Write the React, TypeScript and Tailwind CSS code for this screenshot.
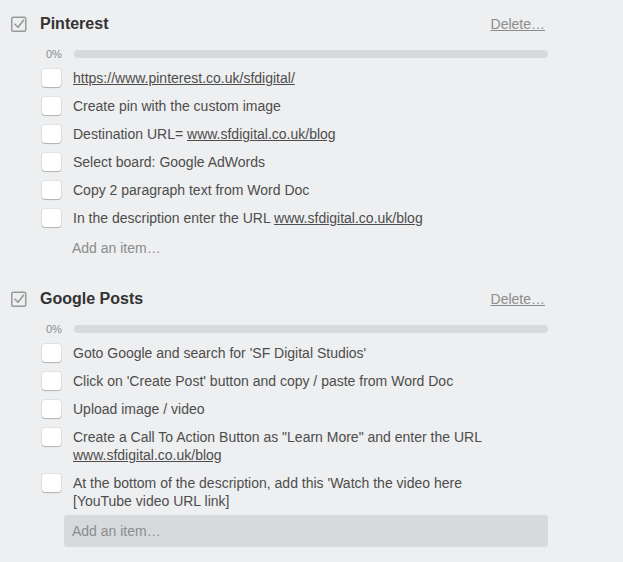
import React from "react";

type Part = { t: string; link?: boolean };
type Item = Part[];

const sections: { title: string; items: Item[]; active?: boolean }[] = [
  {
    title: "Pinterest",
    items: [
      [{ t: "https://www.pinterest.co.uk/sfdigital/", link: true }],
      [{ t: "Create pin with the custom image" }],
      [{ t: "Destination URL= " }, { t: "www.sfdigital.co.uk/blog", link: true }],
      [{ t: "Select board: Google AdWords" }],
      [{ t: "Copy 2 paragraph text from Word Doc" }],
      [{ t: "In the description enter the URL " }, { t: "www.sfdigital.co.uk/blog", link: true }],
    ],
  },
  {
    title: "Google Posts",
    active: true,
    items: [
      [{ t: "Goto Google and search for 'SF Digital Studios'" }],
      [{ t: "Click on 'Create Post' button and copy / paste from Word Doc" }],
      [{ t: "Upload image / video" }],
      [
        { t: 'Create a Call To Action Button as "Learn More" and enter the URL ' },
        { t: "www.sfdigital.co.uk/blog", link: true },
      ],
      [{ t: "At the bottom of the description, add this 'Watch the video here [YouTube video URL link]" }],
    ],
  },
];

function HeaderIcon() {
  return (
    <svg width="17" height="16" viewBox="0 0 17 16" fill="none" className="shrink-0">
      <rect x="0.75" y="1.25" width="14" height="14" rx="1.5" stroke="#999" strokeWidth="1.5" />
      <path d="M4 8.2 L7 11.2 L12.5 4.2" stroke="#999" strokeWidth="1.6" strokeLinecap="round" strokeLinejoin="round" />
    </svg>
  );
}

export default function App() {
  return (
    <div
      className="w-[623px] min-h-[562px] bg-[#edeff0] pt-[1px] pl-[11px] pr-[75px] text-[#4d4d4d]"
      style={{ fontFamily: '"Liberation Sans", Arial, sans-serif' }}
    >
      {sections.map((s, si) => (
        <div key={si} className="pt-[13px] pb-[12px]">
          <div className="flex items-center h-[20px]">
            <HeaderIcon />
            <div className="ml-[12px] text-[16px] leading-[20px] font-bold text-[#333]">{s.title}</div>
            <div className="ml-auto mr-[3px] text-[14px] leading-[18px] text-[#8c8c8c] underline">Delete…</div>
          </div>
          <div className="mt-[14px] flex items-center h-[12px] pl-[35px]">
            <div className="w-[28px] text-[11px] leading-[12px] text-[#8c8c8c]">0%</div>
            <div className="flex-1 h-[8px] rounded-[4px] bg-[#d6dadc]" />
          </div>
          <div className="mt-[4px]">
            {s.items.map((it, ii) => (
              <div key={ii} className="flex items-start pl-[31px] pr-[30px] py-[5px]">
                <div className="w-[19px] h-[18px] shrink-0 rounded-[3px] bg-white shadow-[0_0_0_1px_rgba(0,0,0,0.05),0_1px_1px_rgba(0,0,0,0.22)]" />
                <div className="ml-[12px] text-[14px] leading-[18px] flex-1">
                  {it.map((p, pi) =>
                    p.link ? (
                      <span key={pi} className="underline">
                        {p.t}
                      </span>
                    ) : (
                      <span key={pi}>{p.t}</span>
                    )
                  )}
                </div>
              </div>
            ))}
          </div>
          <div
            className={
              "ml-[53px] h-[32px] flex items-center pl-[8px] rounded-[3px] text-[14px] text-[#8c8c8c] " +
              (s.active ? "bg-[#d6dadc]" : "")
            }
          >
            Add an item…
          </div>
        </div>
      ))}
    </div>
  );
}
